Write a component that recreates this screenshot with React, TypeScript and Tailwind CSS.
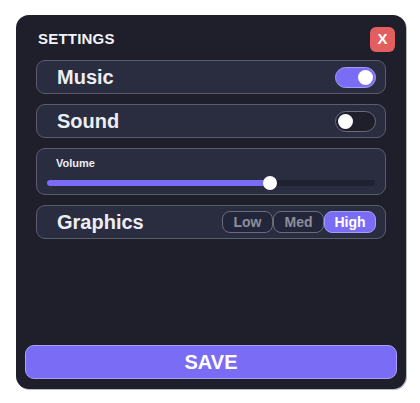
import React, { useState } from "react";

// ── Toggle ───────────────────────────────────────────────────────────────────

function Toggle({ on }: { on: boolean }) {
  return (
    <div
      className={
        on
          ? "flex h-[21px] w-[41px] items-center justify-end rounded-full border border-[#a59cf7] bg-[#7b6cf6] px-[2px]"
          : "flex h-[21px] w-[41px] items-center justify-start rounded-full border border-[#6a6c7c] bg-[#1e1f2b] px-[2px]"
      }
    >
      <div className="h-[15px] w-[15px] rounded-full bg-white" />
    </div>
  );
}

// ── Row ──────────────────────────────────────────────────────────────────────

function Row({ label, children }: { label: string; children: React.ReactNode }) {
  return (
    <div className="flex h-[34px] items-center justify-between rounded-[9px] border border-[#5b5d6e] bg-[#2a2c3f] pl-[20px] pr-[9px]">
      <span className="text-[20px] font-bold text-[#eceef4]">{label}</span>
      {children}
    </div>
  );
}

// ── Main ─────────────────────────────────────────────────────────────────────

export default function App() {
  const [volume] = useState(68);
  const levels = ["Low", "Med", "High"];
  const active = "High";

  return (
    <div
      className="h-[403px] w-[420px] bg-white pl-[16px] pt-[15px]"
      style={{ fontFamily: '"Liberation Sans", Arial, sans-serif' }}
    >
      <div className="flex h-[374px] w-[390px] flex-col rounded-[13px] bg-[#1e1f2b] shadow-[1px_1px_0_#b9bac4]">
        {/* Header */}
        <div className="flex items-center justify-between pl-[22px] pr-[11px] pt-[12px]">
          <h2 className="text-[15px] font-bold tracking-[0.2px] text-[#f2f3f7]">SETTINGS</h2>
          <button className="flex h-[25px] w-[25px] items-center justify-center rounded-[6px] bg-[#e35f5f] text-[15px] font-bold text-white">
            X
          </button>
        </div>

        {/* Options */}
        <div className="mx-[20px] mt-[8px] flex flex-col gap-[10px]">
          <Row label="Music">
            <Toggle on />
          </Row>
          <Row label="Sound">
            <Toggle on={false} />
          </Row>

          <div className="flex h-[47px] flex-col rounded-[9px] border border-[#5b5d6e] bg-[#2a2c3f] px-[10px] pt-[7px]">
            <span className="pl-[9px] text-[11px] font-bold leading-[14px] text-[#eceef4]">Volume</span>
            <div className="relative mt-[10px] h-[6px] w-full rounded-full bg-[#1f2030]">
              <div className="h-full rounded-full bg-[#7b6cf6]" style={{ width: `${volume}%` }} />
              <div
                className="absolute top-1/2 h-[14px] w-[14px] -translate-x-1/2 -translate-y-1/2 rounded-full bg-white"
                style={{ left: `${volume}%` }}
              />
            </div>
          </div>

          <Row label="Graphics">
            <div className="flex">
              {levels.map((lvl) => (
                <div
                  key={lvl}
                  className={
                    lvl === active
                      ? "flex h-[22px] w-[52px] items-center justify-center rounded-[8px] border border-[#a59cf7] bg-[#7b6cf6] text-[14px] font-bold text-white"
                      : "flex h-[22px] w-[51px] items-center justify-center rounded-[8px] border border-[#6a6c7c] bg-[#23253a] text-[14px] font-bold text-[#8c8e9c]"
                  }
                >
                  {lvl}
                </div>
              ))}
            </div>
          </Row>
        </div>

        {/* Save */}
        <button className="mx-[9px] mb-[10px] mt-auto flex h-[34px] items-center justify-center rounded-[9px] border border-[#a99ff8] bg-[#7b6cf6] text-[20px] font-bold text-white">
          SAVE
        </button>
      </div>
    </div>
  );
}
